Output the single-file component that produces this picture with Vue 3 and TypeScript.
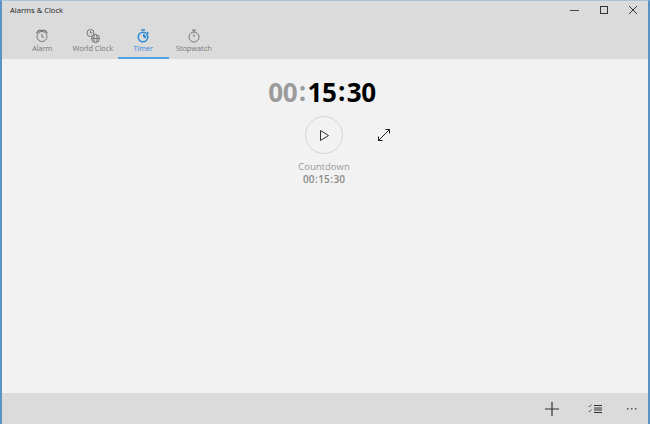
<template>
  <div class="window">
    <header class="chrome">
      <div class="titlebar">
        <span class="app-title">Alarms &amp; Clock</span>
        <div class="window-buttons">
          <svg width="10" height="10" viewBox="0 0 10 10"><path d="M0 5.5h9" stroke="#444" fill="none" /></svg>
          <svg width="10" height="10" viewBox="0 0 10 10"><rect x="1.5" y="1.5" width="7" height="7" stroke="#333" fill="none" /></svg>
          <svg width="10" height="10" viewBox="0 0 10 10"><path d="M1 1l8 8M9 1l-8 8" stroke="#333" fill="none" /></svg>
        </div>
      </div>
      <nav class="tabs">
        <div v-for="tab in tabs" :key="tab" class="tab" :class="{ active: tab === 'Timer' }">
          <svg class="tab-icon" width="14" height="14" viewBox="0 0 14 14" fill="none" stroke="currentColor" stroke-width="1">
            <template v-if="tab === 'Alarm'">
              <circle cx="7" cy="7.5" r="5" />
              <path d="M1.5 4l2.500-2.500h6L12.500 4" stroke-width="1.300" />
              <path d="M7 5v3h2" />
            </template>
            <template v-else-if="tab === 'World Clock'">
              <circle cx="4.500" cy="4" r="3.500" />
              <path d="M4.500 2v2h2" />
              <circle cx="9.500" cy="9.500" r="4" fill="#dbdbdb" />
              <ellipse cx="9.500" cy="9.500" rx="1.700" ry="4" />
              <path d="M5.500 9.500h8" />
            </template>
            <template v-else-if="tab === 'Timer'">
              <circle cx="7" cy="8" r="4.700" stroke-width="1.600" />
              <path d="M5 1h4M11 3l1.500 1.500" stroke-width="1.400" />
              <path d="M7 8V5a3 3 0 0 1 2.600 4.500z" fill="currentColor" stroke="none" />
            </template>
            <template v-else>
              <circle cx="7" cy="8" r="5" />
              <path d="M5 1h4M7 1v2M7 5v3" />
            </template>
          </svg>
          <span class="tab-label">{{ tab }}</span>
        </div>
      </nav>
    </header>

    <main class="content">
      <div class="clock">
        <span class="dim">00<span class="sep">:</span></span><span>15<span class="sep">:</span>30</span>
      </div>
      <div class="controls">
        <button class="play">
          <svg width="11" height="13" viewBox="0 0 11 13"><path d="M1.500 1.500v10l8-5z" fill="none" stroke="#333" /></svg>
        </button>
        <svg class="expand" width="14" height="14" viewBox="0 0 14 14" fill="none" stroke="#222">
          <path d="M1.500 12.500l11-11M8.500 1.500h4v4M1.500 8.500v4h4" />
        </svg>
      </div>
      <div class="name">Countdown</div>
      <div class="duration">00<span class="sep-small">:</span>15<span class="sep-small">:</span>30</div>
    </main>

    <footer class="command-bar">
      <svg width="14" height="14" viewBox="0 0 14 14"><path d="M7 0v14M0 7h14" stroke="#333" stroke-width="1.200" fill="none" /></svg>
      <svg class="list" width="14" height="10" viewBox="0 0 14 10" fill="none" stroke="#333">
        <path d="M6 1.500h8M6 4h8M6 6h8M6 8.500h8" />
        <path d="M0.500 2l1 1 2-2.500M0.500 7l1 1 2-2.500" stroke="#666" />
      </svg>
      <svg width="10" height="4" viewBox="0 0 10 4" fill="#555">
        <rect x="0" y="1" width="1.500" height="1.500" />
        <rect x="4" y="1" width="1.500" height="1.500" />
        <rect x="8" y="1" width="1.500" height="1.500" />
      </svg>
    </footer>
  </div>
</template>

<script setup lang="ts">
const tabs: string[] = ['Alarm', 'World Clock', 'Timer', 'Stopwatch']
</script>

<style>
html,
body {
  margin: 0;
  background: #f2f2f2;
}
</style>

<style scoped>
.window {
  width: 650px;
  height: 424px;
  box-sizing: border-box;
  display: flex;
  flex-direction: column;
  overflow: hidden;
  background: #f2f2f2;
  border-top: 1px solid #a9c4dc;
  border-left: 2px solid #5b93c4;
  border-right: 2px solid #5b93c4;
  font-family: "Open Sans", "Noto Sans", sans-serif;
}

.chrome {
  background: #dbdbdb;
  height: 58px;
  flex-shrink: 0;
  display: flex;
  flex-direction: column;
}

.titlebar {
  display: flex;
  align-items: center;
  justify-content: space-between;
  height: 18px;
  padding-left: 8px;
  color: #222;
}

.app-title {
  font-size: 7.600px;
}

.window-buttons {
  display: flex;
  gap: 19px;
  padding-right: 10px;
}

.tabs {
  display: flex;
  padding-left: 15px;
  margin-top: 7px;
  flex: 1;
}

.tab {
  width: 50.500px;
  display: flex;
  flex-direction: column;
  align-items: center;
  color: #777;
  font-size: 7.300px;
  box-sizing: border-box;
  padding-top: 3px;
  white-space: nowrap;
}

.tab-label {
  line-height: 11px;
}

.tab.active {
  color: #2f8ad8;
  border-bottom: 2px solid #4fa3e3;
}

.content {
  flex: 1;
  display: flex;
  flex-direction: column;
  align-items: center;
  padding-right: 2px;
}

.clock {
  margin-top: 14px;
  margin-right: 4px;
  font-size: 26px;
  line-height: 38px;
  font-weight: 700;
  letter-spacing: -0.300px;
  color: #000;
}

.sep {
  margin: 0 1.500px;
  position: relative;
  top: -1px;
}

.sep-small {
  margin: 0 0.500px;
}

.dim {
  color: #9b9b9b;
}

.controls {
  position: relative;
  margin-top: 5px;
  height: 38px;
}

.play {
  width: 38px;
  height: 38px;
  padding: 0;
  border: 1px solid #d4d4d4;
  border-radius: 50%;
  background: none;
  display: flex;
  align-items: center;
  justify-content: center;
}

.expand {
  position: absolute;
  left: 72px;
  top: 12px;
}

.name {
  margin-top: 6px;
  font-size: 9.500px;
  line-height: 14px;
  color: #999;
}

.duration {
  font-size: 10px;
  line-height: 13px;
  font-weight: 600;
  color: #8a8a8a;
  margin-top: -1px;
}

.command-bar {
  height: 31px;
  flex-shrink: 0;
  background: #dbdbdb;
  display: flex;
  align-items: center;
  justify-content: flex-end;
  padding-right: 11px;
}

.list {
  margin-left: 29px;
  margin-right: 25px;
}
</style>
